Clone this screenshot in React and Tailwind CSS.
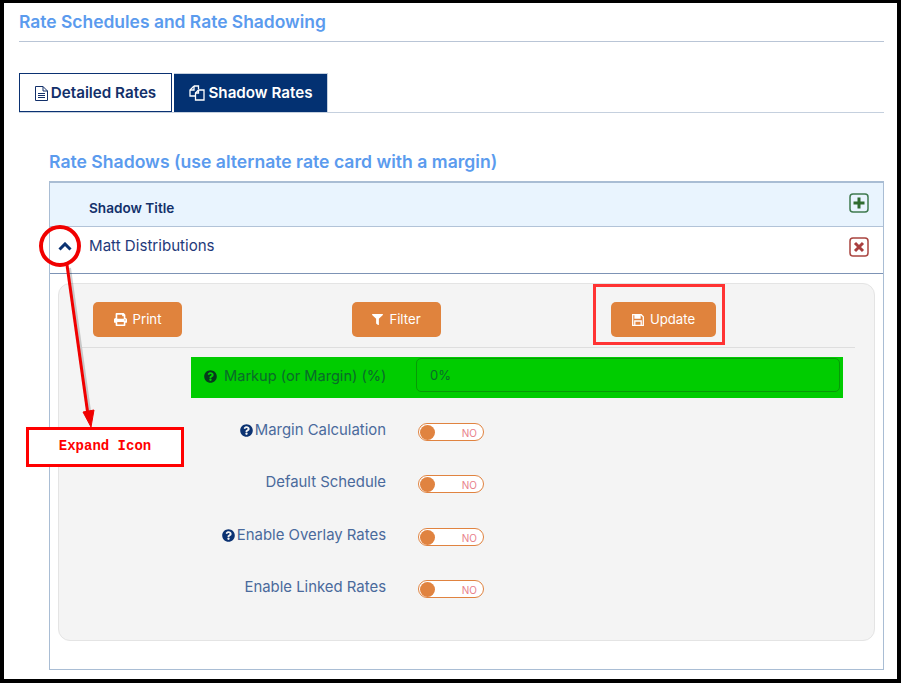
import React from "react";
import { FaPrint, FaFilter, FaQuestionCircle } from "react-icons/fa";

function FileTextIcon() {
  return (
    <svg width="13" height="15" viewBox="0 0 13 15" fill="none" stroke="#12306a" strokeWidth="1">
      <path d="M.5.5h7.5l4.5 4.5v9.500h-12z" />
      <path d="M8 .5v4.500h4.500" />
      <path d="M3 7.500h7M3 9.500h7M3 11.500h7" />
    </svg>
  );
}

function FilesIcon() {
  return (
    <svg width="16" height="16" viewBox="0 0 16 16" fill="none" stroke="#fff" strokeWidth="1.300">
      <path d="M5 1h4.500v3M5 1L1 5v6h5" />
      <path d="M5 1v4H1" />
      <path d="M9.500 5H15v10H6.500V8z" />
      <path d="M9.500 5v3h-3" />
    </svg>
  );
}

function SaveIcon() {
  return (
    <svg width="12" height="12" viewBox="0 0 12 12" fill="none" stroke="#fff" strokeWidth="1.300">
      <path d="M.7.700h8.500l2.100 2.100v8.500H.7z" />
      <path d="M3 1v3h5V1" fill="#fff" />
      <path d="M2.800 11V7h6.400v4" />
    </svg>
  );
}

function Toggle() {
  return (
    <div className="relative h-[18px] w-[66px] rounded-full border border-[#e08340] bg-white">
      <div className="absolute left-[1px] top-[0.5px] h-[15px] w-[15px] rounded-full bg-[#e08340]" />
      <span className="absolute right-[6px] top-[2px] text-[10px] leading-[14px] text-[#e8808a]">NO</span>
    </div>
  );
}

function SettingRow({ label, help, className }) {
  return (
    <div className={"flex items-center " + className}>
      <div className="flex w-[327px] items-center justify-end text-[14.900px] leading-[20px] text-[#4a6a9c]">
        {help && <FaQuestionCircle className="mr-[2px] text-[13px] text-[#0b3272]" />}
        <span>{label}</span>
      </div>
      <div className="ml-[32px] mt-[4px]"><Toggle /></div>
    </div>
  );
}

function Btn({ icon, label, w }) {
  return (
    <button className={"flex h-[35px] items-center justify-center gap-[6px] rounded-[5px] bg-[#e0833d] text-[13.200px] text-white " + w}>
      {icon}
      <span>{label}</span>
    </button>
  );
}

export default function App() {
  return (
    <div className="relative h-[683px] w-[901px] overflow-hidden border-b-[4px] border-l-[4px] border-r-[4px] border-t-[3px] border-black bg-white font-['Inter',sans-serif]">
      <div className="pl-[15px] pr-[13px]">
        <h1 className="flex h-[39px] items-center border-b border-[#b9c5d6] text-[17.450px] font-semibold text-[#5b9bee]">
          Rate Schedules and Rate Shadowing
        </h1>
        <div className="mt-[31px] flex h-[40px] gap-[2px] border-b border-[#c5d0de]">
          <div className="flex w-[153px] items-center justify-center gap-[3px] border border-[#0b3272] pt-[1px] text-[15.200px] font-semibold text-[#12306a]">
            <FileTextIcon />
            <span>Detailed Rates</span>
          </div>
          <div className="flex w-[154px] items-center justify-center gap-[3px] border-r border-t border-[#c5d0de] bg-[#033172] pl-[1px] text-[15.200px] font-semibold text-white">
            <FilesIcon />
            <span>Shadow Rates</span>
          </div>
        </div>
        <h2 className="ml-[30px] mt-[39px] text-[17.600px] font-semibold leading-[20px] text-[#5b9bee]">
          Rate Shadows (use alternate rate card with a margin)
        </h2>
        <div className="ml-[30px] mt-[9px] h-[489px] border border-t-2 border-[#a9bdd4] border-b-[#a9bdd4]">
          <div className="flex h-[44px] items-center justify-between border-b border-[#b2c3d8] bg-[#e9f4fe] pl-[39px] pr-[14px]">
            <span className="mt-[7px] text-[13.600px] font-semibold text-[#12306a]">Shadow Title</span>
            <svg width="20" height="20" viewBox="0 0 20 20" className="mb-[4px]">
              <rect x="1" y="1" width="18" height="18" rx="3" fill="none" stroke="#3f7a4f" strokeWidth="1.500" />
              <path d="M10 4.500v11M4.500 10h11" stroke="#2f6b2f" strokeWidth="3" />
            </svg>
          </div>
          <div className="relative flex h-[47px] items-center justify-between border-b border-[#7d93b5] pl-[39px] pr-[14px]">
            <svg width="14" height="9" viewBox="0 0 14 9" fill="none" className="absolute left-[8px] top-[15px]">
              <path d="M1.500 7.500L7 2l5.500 5.500" stroke="#0b3272" strokeWidth="3" />
            </svg>
            <span className="mb-[8px] text-[15.100px] text-[#1f3a7a]">Matt Distributions</span>
            <svg width="20" height="20" viewBox="0 0 20 20" className="mb-[6px]">
              <rect x="1" y="1" width="18" height="18" rx="3" fill="none" stroke="#a9443f" strokeWidth="1.500" />
              <path d="M6 6l8 8M14 6l-8 8" stroke="#a93f3f" strokeWidth="3" />
            </svg>
          </div>
          <div className="mx-[8px] mt-[9px] h-[358px] rounded-[12px] border border-[#e4e4e4] bg-[#f4f4f4] pt-[18px]">
            <div className="ml-[34px] grid grid-cols-[259px_259px_1fr]">
              <Btn icon={<FaPrint className="text-[13px]" />} label="Print" w="w-[89px]" />
              <Btn icon={<FaFilter className="text-[11px]" />} label="Filter" w="w-[89px]" />
              <Btn icon={<SaveIcon />} label="Update" w="w-[105px]" />
            </div>
            <div className="ml-[23px] mr-[19px] mt-[10px] border-t border-[#dedede]" />
            <div className="ml-[132px] mr-[31px] mt-[9px] flex h-[41px] items-start bg-[#00cc00]">
              <div className="flex h-[39px] w-[225px] items-center pl-[13px] text-[14.600px] text-[#0a6a2a]">
                <FaQuestionCircle className="mr-[7px] text-[13px] text-[#063a1c]" />
                <span>Markup (or Margin) (%)</span>
              </div>
              <div className="mr-[3px] mt-[1px] flex h-[34px] flex-1 items-center rounded-[5px] border border-[#079a07] pl-[13px] pt-[2px] text-[13px] text-[#0a6a2a]">
                0%
              </div>
            </div>
            <SettingRow help label="Margin Calculation" className="mt-[22px] h-[20px]" />
            <SettingRow label="Default Schedule" className="mt-[32px] h-[20px]" />
            <SettingRow help label="Enable Overlay Rates" className="mt-[33px] h-[20px]" />
            <SettingRow label="Enable Linked Rates" className="mt-[32px] h-[20px]" />
          </div>
        </div>
      </div>

      {/* Annotations lying over the page */}
      <div className="absolute left-[589px] top-[281px] h-[61px] w-[132px] border-[3px] border-[#ff3333]" />
      <svg className="absolute left-[-4px] top-[-3px]" width="901" height="683" viewBox="0 0 901 683" fill="none">
        <path d="M69 268l21 150" stroke="#000" strokeOpacity="0.18" strokeWidth="4" />
        <circle cx="60" cy="246" r="19" stroke="#f00000" strokeWidth="4" />
        <path d="M67 265l21 150" stroke="#f00000" strokeWidth="3" />
        <path d="M83 412l11-2-3 17z" fill="#f00000" stroke="#f00000" strokeWidth="1" />
      </svg>
      <div className="absolute left-[22px] top-[424px] flex h-[40px] w-[158px] items-center justify-center border-[3px] border-[#ff0000] bg-white pb-[2px] font-['Liberation_Mono',monospace] text-[14px] font-bold text-[#ff0000]">
        Expand Icon
      </div>
    </div>
  );
}
